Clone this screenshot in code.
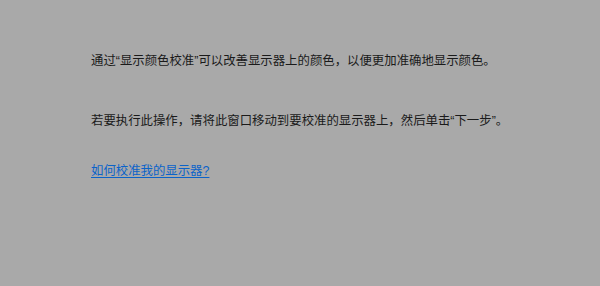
export default function App() {
  return (
    <div
      className="w-[600px] h-[286px] bg-[#a9a9a9] text-[#1a1a1a] pl-[91px] pt-[52px] text-[12.4px] leading-[18px]"
      style={{ fontFamily: '"Liberation Sans", "Noto Sans CJK SC", sans-serif' }}
    >
      <p>通过“显示颜色校准”可以改善显示器上的颜色，以便更加准确地显示颜色。</p>
      <p className="mt-[42px]">若要执行此操作，请将此窗口移动到要校准的显示器上，然后单击“下一步”。</p>
      <a href="#" className="inline-block mt-[32px] text-[#0b63c9] underline underline-offset-2">
        如何校准我的显示器?
      </a>
    </div>
  );
}
